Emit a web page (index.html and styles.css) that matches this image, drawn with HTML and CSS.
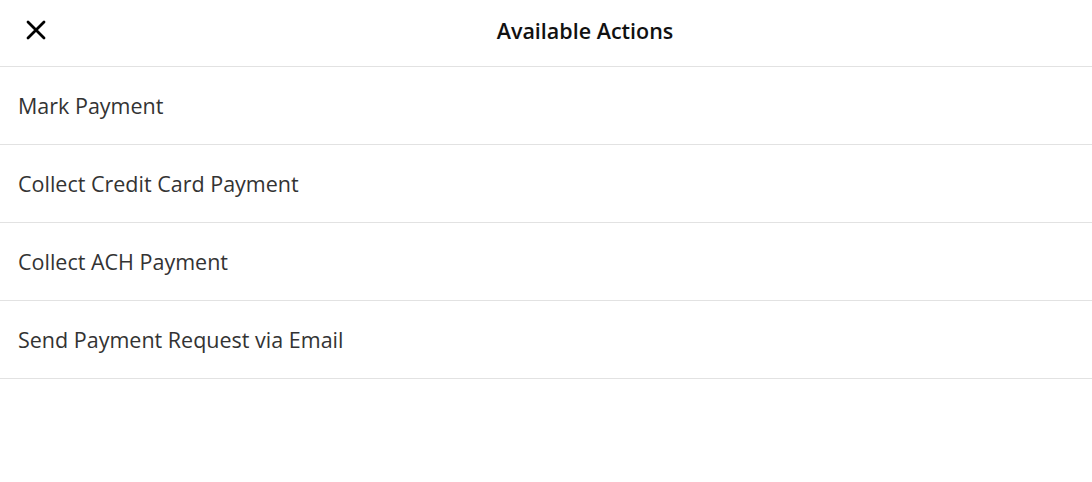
FILE: index.html
```html
<!DOCTYPE html>
<html lang="en">
<head>
    <meta charset="UTF-8">
    <meta name="viewport" content="width=device-width, initial-scale=1.0">
    <title>Available Actions</title>
    <link rel="stylesheet" href="styles.css">
</head>
<body>
    <div class="sheet">
        <div class="header">
            <div class="header-left">
                <button class="close" aria-label="Close">
                    <svg width="20" height="20" viewBox="0 0 20 20">
                        <path d="M2 2 L18 18 M18 2 L2 18" stroke="#000" stroke-width="2.8" stroke-linecap="round" fill="none"/>
                    </svg>
                </button>
            </div>
            <h1>Available Actions</h1>
        </div>
        <ul class="actions">
            <li>Mark Payment</li>
            <li>Collect Credit Card Payment</li>
            <li>Collect ACH Payment</li>
            <li>Send Payment Request via Email</li>
        </ul>
    </div>
</body>
</html>
```

FILE: styles.css
```css
html, body {
    margin: 0;
    padding: 0;
    background-color: #fff;
    font-family: 'Open Sans', 'Liberation Sans', sans-serif;
    color: #333;
}
.header {
    height: 60px;
    padding-bottom: 6px;
    border-bottom: 1px solid #e2e2e2;
    display: flex;
    align-items: center;
}
.header-left {
    width: 78px;
    padding-left: 26px;
    box-sizing: border-box;
    display: flex;
    align-items: center;
}
.header h1 {
    flex: 1;
    margin: 0;
    text-align: center;
    font-size: 21.5px;
    font-weight: 600;
    color: #111;
}
.close {
    width: 20px;
    height: 20px;
    padding: 0;
    border: none;
    background: none;
    cursor: pointer;
}
.close svg {
    display: block;
}
.actions {
    list-style: none;
    margin: 0;
    padding: 0;
}
.actions li {
    height: 77px;
    display: flex;
    align-items: center;
    padding-left: 18px;
    font-size: 21.5px;
    border-bottom: 1px solid #e2e2e2;
    cursor: pointer;
}
```
